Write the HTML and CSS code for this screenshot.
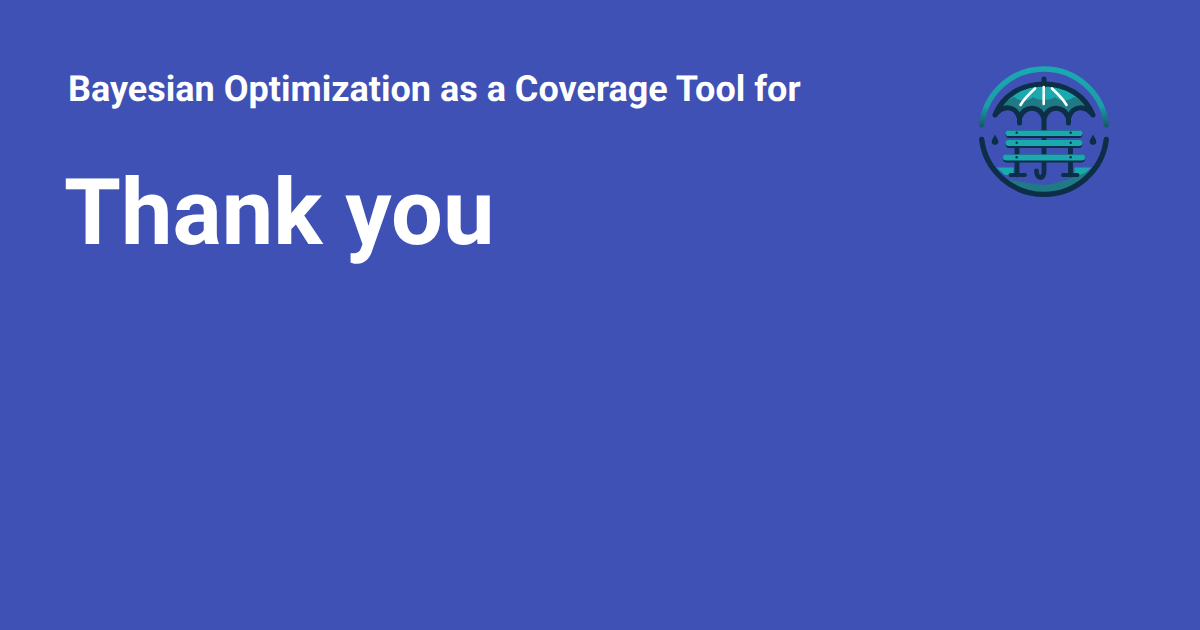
FILE: index.html
```html
<!DOCTYPE html>
<html lang="en">
<head>
<meta charset="utf-8">
<title>Thank you</title>
<link rel="stylesheet" href="styles.css">
</head>
<body>
<main class="card">
  <div class="copy">
    <p class="site">Bayesian Optimization as a Coverage Tool for</p>
    <h1 class="title">Thank you</h1>
  </div>
  <svg class="logo" viewBox="970 60 150 150" width="150" height="150" aria-hidden="true">
    <defs>
      <linearGradient id="arcTop" x1="0" y1="68" x2="0" y2="126" gradientUnits="userSpaceOnUse">
        <stop offset="0" stop-color="#1aa9b0"/><stop offset="0.65" stop-color="#1a9ea8"/><stop offset="1" stop-color="#175a6c"/>
      </linearGradient>
    </defs>
    <path d="M981.7 125A62.65 62.65 0 0 1 1106.3 125" fill="none" stroke="url(#arcTop)" stroke-width="5.4" stroke-linecap="round"/>
    <path d="M995 115C1003 95 1022 84 1044 84C1066 84 1085 95 1093 115C1085 105 1073 105 1068.5 118C1063 105 1049 105 1044 118C1039 105 1025 105 1019.5 118C1015 105 1003 105 995 115Z" fill="#1aa9ae"/>
    <path d="M997 113C1001 103 1010 99 1014 97C1020 102 1029 101 1033 97C1038 101 1050 101 1055 97C1059 101 1068 102 1074 97C1080 99 1087 103 1091 113C1085 105 1073 105 1068.5 118C1063 105 1049 105 1044 118C1039 105 1025 105 1019.5 118C1015 105 1003 105 997 113Z" fill="#1f7a85"/>
    <path d="M995 115C1003 95 1022 84 1044 84C1066 84 1085 95 1093 115M995 115C1003 105 1015 105 1019.5 118C1025 105 1039 105 1044 118C1049 105 1063 105 1068.5 118C1073 105 1085 105 1093 115" fill="none" stroke="#0c2e47" stroke-width="5" stroke-linecap="round" stroke-linejoin="round"/>
    <path d="M1044 79V85M1044 116V131M1019.5 118V123M1068.5 118V123" fill="none" stroke="#0c2e47" stroke-width="5" stroke-linecap="round"/>
    <path d="M1035 88.5C1029 94 1024 99 1020.5 105M1043.7 87V104M1052 88.5C1058 94 1063 99 1066.5 105" fill="none" stroke="#fff" stroke-width="2.6" stroke-linecap="round"/>
    <path d="M996.5 167.5H1013.5V175H1005ZM1074.5 167.5H1091.5L1083 175H1074.5Z" fill="#1aa9ae"/>
    <path d="M1003 179C1020 181 1032 184 1044 185C1056 184 1072 178 1085 173L1091 170C1088 184 1060 195 1044 194C1026 194 1010 186 1003 179Z" fill="#1f7a85"/>
    <path d="M1017 146V175M1070.5 146V175M1044 136V172C1044 179.5 1036.5 179.5 1036.5 171" fill="none" stroke="#0c2e47" stroke-width="4.8" stroke-linecap="round"/>
    <path d="M1010.5 175H1025M1063 175H1077.5" fill="none" stroke="#0c2e47" stroke-width="3.8" stroke-linecap="round"/>
    <g fill="#0c2e47">
      <rect x="1005.5" y="130.5" width="77" height="7.5" rx="3.7"/>
      <rect x="1005.5" y="140" width="77" height="8" rx="3.7"/>
      <rect x="1003" y="154.5" width="82" height="8" rx="3.8"/>
    </g>
    <g fill="#1aa9ae">
      <rect x="1005.5" y="130.5" width="77" height="5.6" rx="2.8"/>
      <rect x="1005.5" y="140" width="77" height="6" rx="3"/>
      <rect x="1003" y="154.5" width="82" height="6" rx="3"/>
    </g>
    <g fill="#0c2e47">
      <circle cx="1016.7" cy="132.7" r="1.2"/><circle cx="1070.7" cy="132.7" r="1.2"/>
      <circle cx="1016.7" cy="142.7" r="1.2"/><circle cx="1070.7" cy="142.7" r="1.2"/>
      <circle cx="1016.7" cy="157.3" r="1.2"/><circle cx="1070.7" cy="157.3" r="1.2"/>
      <path d="M995 134.5C996.5 138 998.3 139.5 998.3 141.5A3.3 3.3 0 0 1 991.7 141.5C991.7 139.5 993.5 138 995 134.5Z"/>
      <path d="M1093 134.5C1094.5 138 1096.3 139.5 1096.3 141.5A3.3 3.3 0 0 1 1089.7 141.5C1089.7 139.5 1091.5 138 1093 134.5Z"/>
    </g>
    <path d="M981.7 139.5A62.8 62.8 0 0 0 1106.3 139.5" fill="none" stroke="#0c2e47" stroke-width="5.4" stroke-linecap="round"/>
  </svg>
</main>
</body>
</html>
```
FILE: styles.css
```css
html, body {
  margin: 0;
  padding: 0;
}

body {
  width: 1200px;
  height: 630px;
  overflow: hidden;
  background: #3f51b5;
  font-family: Roboto, "Liberation Sans", sans-serif;
  color: #fff;
  text-rendering: geometricPrecision;
}

.card {
  display: flex;
  justify-content: space-between;
  align-items: flex-start;
  height: 630px;
  box-sizing: border-box;
  padding: 60px 80px 0 68px;
}

.copy {
  display: flex;
  flex-direction: column;
}

.site {
  margin: 0;
  font-size: 36px;
  line-height: 58px;
  font-weight: 700;
}

.title {
  margin: 44px 0 0 -4px;
  font-size: 92px;
  line-height: 104px;
  font-weight: 700;
}

.logo {
  display: block;
  flex: none;
}
```
